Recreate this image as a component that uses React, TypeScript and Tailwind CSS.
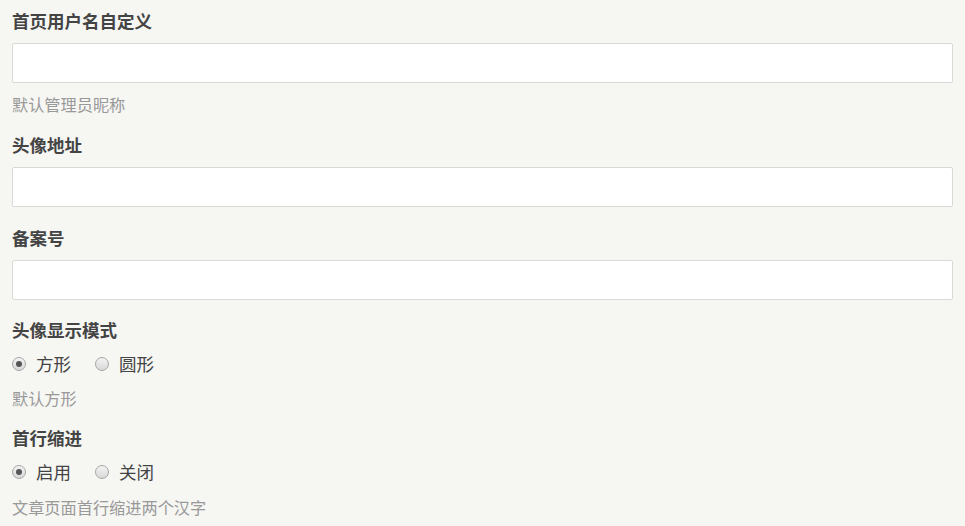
import React from "react";

const font = { fontFamily: '"Microsoft YaHei", "Noto Sans CJK SC", "Noto Sans", sans-serif' };

function Label({ children }: { children: React.ReactNode }) {
  return <div className="text-[17.5px] font-bold leading-[24px] text-[#444]">{children}</div>;
}

function Input() {
  return <div className="mt-[10px] h-[40px] w-full rounded-[2px] border border-[#d9d9d6] bg-white" />;
}

function Desc({ children, mt = "mt-[10px]" }: { children: React.ReactNode; mt?: string }) {
  return <div className={`${mt} text-[16.2px] leading-[22px] text-[#999]`}>{children}</div>;
}

function Radio({ checked, label }: { checked?: boolean; label: string }) {
  return (
    <span className="flex items-center">
      <span className="flex h-[14px] w-[14px] items-center justify-center rounded-full border border-[#a6a6a6] bg-gradient-to-b from-[#f4f4f4] to-[#d8d8d8]">
        {checked && <span className="h-[6px] w-[6px] rounded-full bg-[#555]" />}
      </span>
      <span className="ml-[10px] text-[17.5px] leading-[24px] text-[#444]">{label}</span>
    </span>
  );
}

export default function App() {
  return (
    <div className="min-h-[526px] w-full bg-[#f6f6f3] px-[12px] pt-[9px]" style={font}>
      <div className="flex flex-col">
        <div>
          <Label>首页用户名自定义</Label>
          <Input />
          <Desc>默认管理员昵称</Desc>
        </div>
        <div className="mt-[18px]">
          <Label>头像地址</Label>
          <Input />
        </div>
        <div className="mt-[19px]">
          <Label>备案号</Label>
          <Input />
        </div>
        <div className="mt-[18px]">
          <Label>头像显示模式</Label>
          <div className="mt-[10px] flex gap-[24px]">
            <Radio checked label="方形" />
            <Radio label="圆形" />
          </div>
          <Desc mt="mt-[11px]">默认方形</Desc>
        </div>
        <div className="mt-[17px]">
          <Label>首行缩进</Label>
          <div className="mt-[10px] flex gap-[24px]">
            <Radio checked label="启用" />
            <Radio label="关闭" />
          </div>
          <Desc mt="mt-[12px]">文章页面首行缩进两个汉字</Desc>
        </div>
      </div>
    </div>
  );
}
